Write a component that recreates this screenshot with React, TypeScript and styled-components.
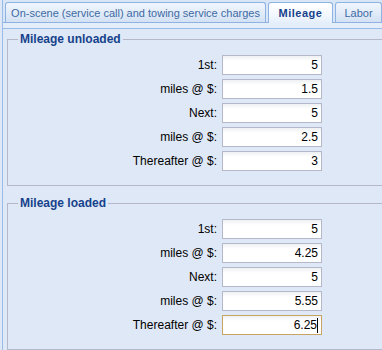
import React from 'react';
import styled, {createGlobalStyle} from "styled-components";

type Entry = { label: string; value: string; focused?: boolean };

const tabs = [
    {title: "On-scene (service call) and towing service charges", width: 261},
    {title: "Mileage", width: 65, active: true},
    {title: "Labor", width: 47},
];

const sections: { title: string; rows: Entry[] }[] = [
    {
        title: "Mileage unloaded",
        rows: [
            {label: "1st:", value: "5"},
            {label: "miles @ $:", value: "1.5"},
            {label: "Next:", value: "5"},
            {label: "miles @ $:", value: "2.5"},
            {label: "Thereafter @ $:", value: "3"},
        ]
    },
    {
        title: "Mileage loaded",
        rows: [
            {label: "1st:", value: "5"},
            {label: "miles @ $:", value: "4.25"},
            {label: "Next:", value: "5"},
            {label: "miles @ $:", value: "5.55"},
            {label: "Thereafter @ $:", value: "6.25", focused: true},
        ]
    },
];

const GlobalStyle = createGlobalStyle`
  html, body {
    margin: 0;
    padding: 0;
    background: #dfe8f6;
    overflow: hidden;
  }
  body {
    font-family: "Liberation Sans", Arial, sans-serif;
  }
`

const Window = styled.div`
  width: 382px;
  height: 350px;
  overflow: hidden;
  background: #dfe8f6;
`
const Panel = styled.div`
  margin-left: 2px;
  width: 440px;
  height: 350px;
  border-left: 1px solid #99bbe8;
  display: flex;
  flex-direction: column;
`
const TabStrip = styled.div`
  height: 22px;
  display: flex;
  align-items: flex-end;
  gap: 2px;
  padding-left: 2px;
  background: #d9e6f6;
`
const Tab = styled.div<{ $active?: boolean; $w: number }>`
  box-sizing: border-box;
  width: ${p => p.$w}px;
  height: ${p => p.$active ? 21 : 20}px;
  margin-bottom: ${p => p.$active ? -1 : 0}px;
  position: relative;
  z-index: ${p => p.$active ? 1 : 0};
  border: 1px solid #8db2e3;
  border-bottom: none;
  border-radius: 3px 3px 0 0;
  background: ${p => p.$active
          ? "linear-gradient(#ffffff, #f3f8fe 60%, #e4eefb)"
          : "linear-gradient(#f1f6fd, #dfeaf8 60%, #d3e1f3)"};
  color: ${p => p.$active ? "#15428b" : "#416aa3"};
  font-size: 11px;
  font-weight: ${p => p.$active ? "bold" : "normal"};
  letter-spacing: ${p => p.$active ? "0.5px" : "0"};
  display: flex;
  align-items: center;
  justify-content: center;
  padding-bottom: ${p => p.$active ? 1 : 0}px;
  white-space: nowrap;
`
const StripBand = styled.div`
  height: 5px;
  background: #e4eefb;
  border-top: 1px solid #8db2e3;
  border-bottom: 1px solid #99bbe8;
`
const Body = styled.div`
  flex: 1;
  padding: 3px 0 0 4px;
  display: flex;
  flex-direction: column;
  gap: 10px;
`
const FieldSet = styled.fieldset`
  box-sizing: border-box;
  width: 420px;
  margin: 0;
  padding: 9px 10px 14px 10px;
  border: 1px solid #b5b8c8;
  min-inline-size: 0;
`
const Legend = styled.legend`
  padding: 0 2px;
  font-size: 12px;
  line-height: 14px;
  font-weight: bold;
  color: #15428b;
`
const Form = styled.div`
  display: grid;
  grid-template-columns: 199px 100px;
  column-gap: 5px;
  row-gap: 4px;
`
const Label = styled.div`
  font-size: 12px;
  line-height: 20px;
  height: 20px;
  color: #000;
  text-align: right;
  white-space: nowrap;
`
const Field = styled.div<{ $focused?: boolean }>`
  box-sizing: border-box;
  height: 20px;
  border: 1px solid ${p => p.$focused ? "#c7a461" : "#b5b8c8"};
  background: linear-gradient(#eef0f3, #ffffff 5px);
  padding-right: 3px;
  display: flex;
  align-items: center;
  justify-content: flex-end;
  font-size: 12px;
  color: #000;
`
const Caret = styled.span`
  display: inline-block;
  width: 1px;
  height: 15px;
  background: #000;
`

export default function App() {
    return (
        <Window>
            <GlobalStyle/>
            <Panel>
                <TabStrip>
                    {tabs.map(t => (
                        <Tab key={t.title} $w={t.width} $active={t.active}>{t.title}</Tab>
                    ))}
                </TabStrip>
                <StripBand/>
                <Body>
                    {sections.map(s => (
                        <FieldSet key={s.title}>
                            <Legend>{s.title}</Legend>
                            <Form>
                                {s.rows.map((r, i) => (
                                    <React.Fragment key={i}>
                                        <Label>{r.label}</Label>
                                        <Field $focused={r.focused}>
                                            {r.value}
                                            {r.focused && <Caret/>}
                                        </Field>
                                    </React.Fragment>
                                ))}
                            </Form>
                        </FieldSet>
                    ))}
                </Body>
            </Panel>
        </Window>
    );
}
